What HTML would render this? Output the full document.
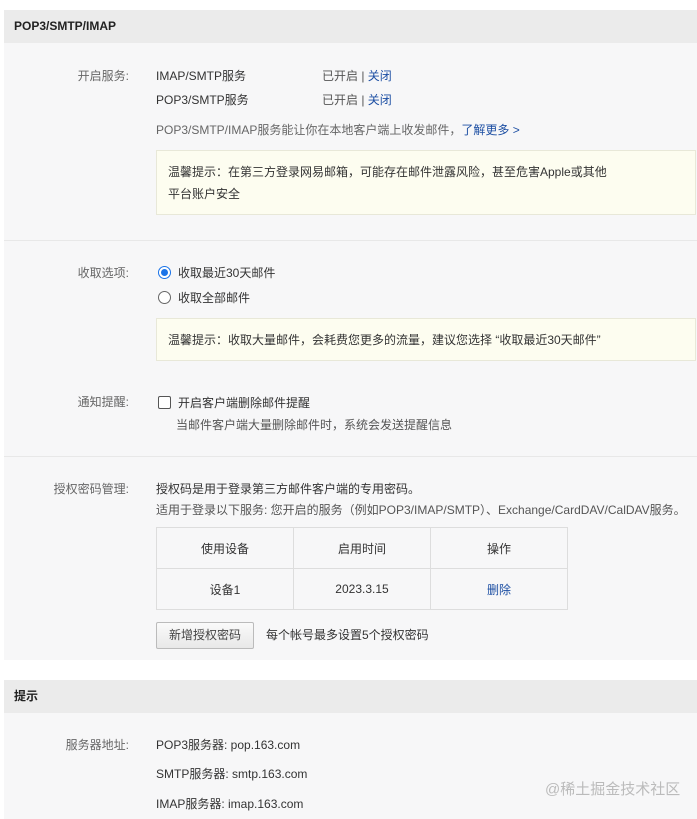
<!DOCTYPE html>
<html><head><meta charset="utf-8"><style>
*{margin:0;padding:0;box-sizing:border-box}
body{width:697px;height:819px;background:#fff;position:relative;overflow:hidden;font-family:"Liberation Sans","Noto Sans CJK SC",sans-serif;font-size:12px;color:#333}
.a{position:absolute;white-space:nowrap;line-height:14px}
.hd{position:absolute;left:4px;right:0;background:#ebebeb;font-weight:bold;font-size:12px;color:#222}
.sec{position:absolute;left:4px;right:0;background:#f7f7f8}
.ln{position:absolute;left:4px;right:0;height:1px;background:#e8e8e8}
.lb{position:absolute;right:568px;color:#666;white-space:nowrap;line-height:14px}
.blue{color:#1d4fa3}
.box{position:absolute;left:156px;right:1px;background:#fdfdf0;border:1px solid #e8e8d8}
table{position:absolute;left:156px;top:527px;width:412px;border-collapse:collapse}
td{border:1px solid #ddd;height:41px;text-align:center;width:137px;color:#333}
</style></head><body>
<div class="hd" style="top:10px;height:33px;line-height:33px;padding-left:10px">POP3/SMTP/IMAP</div>
<div class="sec" style="top:43px;height:197px"></div>
<div class="ln" style="top:240px"></div>
<div class="sec" style="top:241px;height:215px"></div>
<div class="ln" style="top:456px"></div>
<div class="sec" style="top:457px;height:203px"></div>
<div class="hd" style="top:680px;height:33px;line-height:33px;padding-left:10px">提示</div>
<div class="sec" style="top:713px;height:106px"></div>

<div class="lb" style="top:69px">开启服务:</div>
<div class="a" style="left:156px;top:69px">IMAP/SMTP服务</div>
<div class="a" style="left:322px;top:69px;color:#555">已开启 | <span class="blue">关闭</span></div>
<div class="a" style="left:156px;top:93px">POP3/SMTP服务</div>
<div class="a" style="left:322px;top:93px;color:#555">已开启 | <span class="blue">关闭</span></div>
<div class="a" style="left:156px;top:123px;color:#666">POP3/SMTP/IMAP服务能让你在本地客户端上收发邮件，<span class="blue">了解更多 &gt;</span></div>
<div class="box" style="top:150px;height:65px"></div>
<div class="a" style="left:168px;top:165px">温馨提示：在第三方登录网易邮箱，可能存在邮件泄露风险，甚至危害Apple或其他</div>
<div class="a" style="left:168px;top:187px">平台账户安全</div>

<div class="lb" style="top:266px">收取选项:</div>
<div style="position:absolute;left:158px;top:266px;width:13px;height:13px;border-radius:50%;border:1px solid #1a73e8;background:#fff"><div style="position:absolute;left:2px;top:2px;width:7px;height:7px;border-radius:50%;background:#1a73e8"></div></div>
<div class="a" style="left:178px;top:266px">收取最近30天邮件</div>
<div style="position:absolute;left:158px;top:291px;width:13px;height:13px;border-radius:50%;border:1px solid #666;background:#fff"></div>
<div class="a" style="left:178px;top:291px">收取全部邮件</div>
<div class="box" style="top:318px;height:43px"></div>
<div class="a" style="left:168px;top:333px">温馨提示：收取大量邮件，会耗费您更多的流量，建议您选择 “收取最近30天邮件”</div>

<div class="lb" style="top:395px">通知提醒:</div>
<div style="position:absolute;left:158px;top:396px;width:13px;height:13px;border-radius:2px;border:1px solid #555;background:#fff"></div>
<div class="a" style="left:178px;top:396px">开启客户端删除邮件提醒</div>
<div class="a" style="left:176px;top:418px;color:#555">当邮件客户端大量删除邮件时，系统会发送提醒信息</div>

<div class="lb" style="top:482px">授权密码管理:</div>
<div class="a" style="left:156px;top:482px">授权码是用于登录第三方邮件客户端的专用密码。</div>
<div class="a" style="left:156px;top:503px;color:#555">适用于登录以下服务: 您开启的服务（例如POP3/IMAP/SMTP）、Exchange/CardDAV/CalDAV服务。</div>
<table><tr><td>使用设备</td><td>启用时间</td><td>操作</td></tr><tr><td>设备1</td><td>2023.3.15</td><td class="blue">删除</td></tr></table>
<div style="position:absolute;left:156px;top:622px;width:98px;height:27px;border:1px solid #bbb;border-radius:2px;background:linear-gradient(#fafafa,#e8e8e8);text-align:center;line-height:25px;color:#444">新增授权密码</div>
<div class="a" style="left:266px;top:628px">每个帐号最多设置5个授权密码</div>

<div class="lb" style="top:738px">服务器地址:</div>
<div class="a" style="left:156px;top:738px">POP3服务器: pop.163.com</div>
<div class="a" style="left:156px;top:767px">SMTP服务器: smtp.163.com</div>
<div class="a" style="left:156px;top:797px">IMAP服务器: imap.163.com</div>
<div class="a" style="left:545px;top:781px;font-size:15px;line-height:17px;color:#bbb">@稀土掘金技术社区</div>
</body></html>
